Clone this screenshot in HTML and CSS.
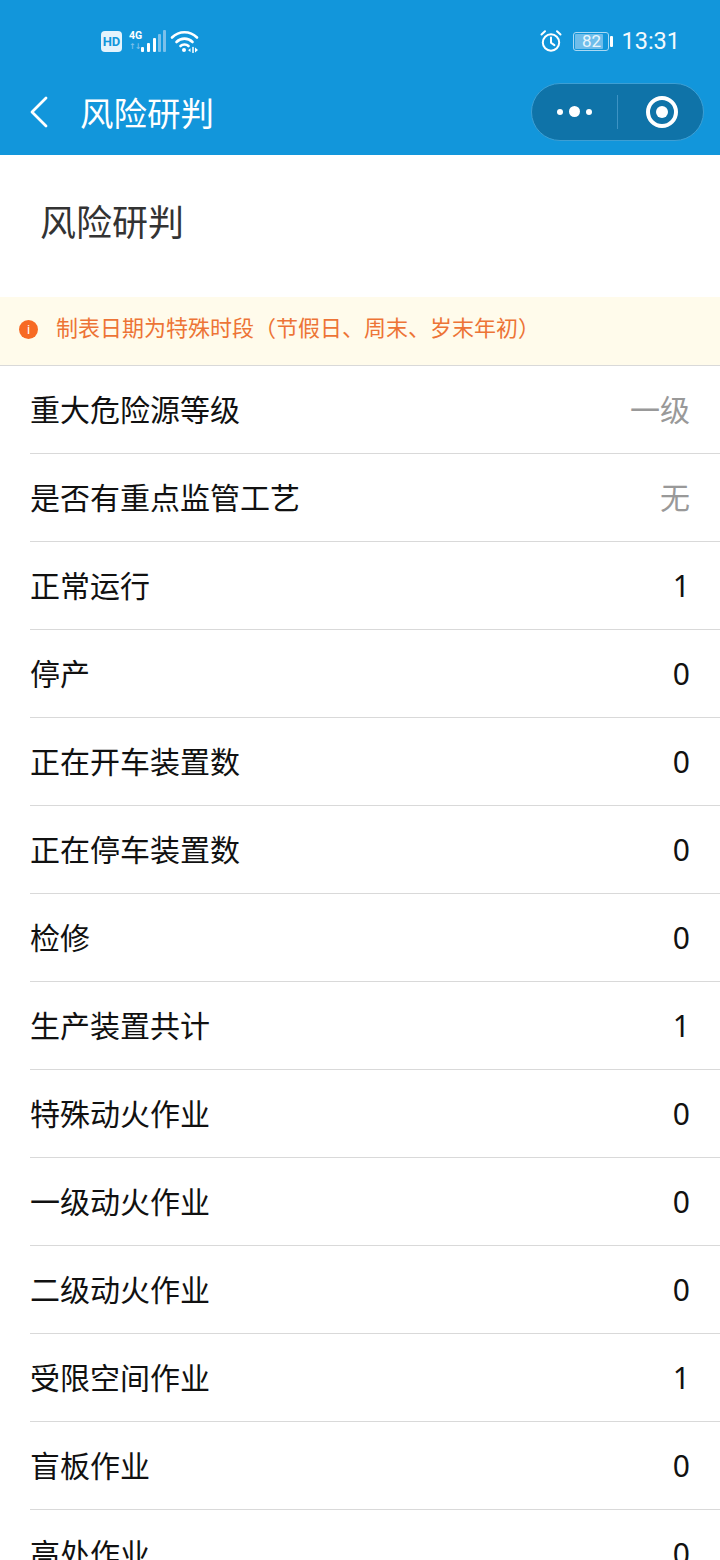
FILE: index.html
```html
<!DOCTYPE html>
<html lang="zh">
<head>
<meta charset="utf-8">
<title>风险研判</title>
<link rel="stylesheet" href="styles.css">
</head>
<body>
<div class="page">
  <header class="top">
    <div class="status">
      <div class="status-left">
        <span class="hd">HD</span>
        <span class="net"><span class="net-4g">4G</span><span class="net-arrows">↑↓</span></span>
        <svg class="signal" width="26" height="24" viewBox="0 0 26 24">
          <rect x="1" y="18" width="3" height="5" rx="1" fill="#fff"/>
          <rect x="7" y="14" width="3" height="9" rx="1" fill="#fff"/>
          <rect x="13" y="9" width="3" height="14" rx="1" fill="#fff"/>
          <rect x="18" y="5" width="3" height="18" rx="1" fill="#7cc0ea"/>
          <rect x="23" y="1" width="3" height="22" rx="1" fill="#7cc0ea"/>
        </svg>
        <svg class="wifi" width="30" height="24" viewBox="0 0 30 24" fill="none" stroke="#fff" stroke-width="2.6" stroke-linecap="round">
          <path d="M2 8.5C9 1.5 20 1.5 27 8.5"/>
          <path d="M6.5 13C11 8.5 18 8.5 22.5 13"/>
          <path d="M10.5 17C12.5 15 16.5 15 18.5 17"/>
          <circle cx="14" cy="21" r="2" fill="#fff" stroke="none"/>
          <path d="M20.5 19.3l-2.4 1.9 2.4 1.9z" fill="#fff" stroke="none"/>
          <path d="M23 18.5v5" stroke-width="1.5"/>
          <path d="M25 18.5l3 2.6-3 2.4z" fill="#fff" stroke="none"/>
        </svg>
      </div>
      <div class="status-right">
        <svg class="alarm" width="24" height="24" viewBox="0 0 24 24" fill="none" stroke="#fff" stroke-width="2" stroke-linecap="round">
          <circle cx="12" cy="13.5" r="8.2"/>
          <path d="M12 8.5v5.2l3.4 2.4"/>
          <path d="M2.5 5.5L6 2.2"/>
          <path d="M21.5 5.5L18 2.2"/>
        </svg>
        <span class="battery"><span class="battery-level"></span><span class="battery-num">82</span></span>
        <span class="battery-tip"></span>
        <span class="clock">13:31</span>
      </div>
    </div>
    <div class="nav">
      <svg class="back" width="20" height="32" viewBox="0 0 20 32" fill="none" stroke="#fff" stroke-width="2.8" stroke-linecap="round" stroke-linejoin="round">
        <path d="M17 2L3 16l14 14"/>
      </svg>
      <h1 class="nav-title">风险研判</h1>
      <div class="capsule">
        <div class="capsule-part">
          <span class="dot"></span><span class="dot dot-big"></span><span class="dot"></span>
        </div>
        <span class="capsule-line"></span>
        <div class="capsule-part">
          <span class="target"><span class="target-core"></span></span>
        </div>
      </div>
    </div>
  </header>

  <h2 class="page-title">风险研判</h2>

  <div class="notice">
    <span class="notice-icon">i</span>
    <span class="notice-text">制表日期为特殊时段（节假日、周末、岁末年初）</span>
  </div>

  <ul class="list">
    <li class="row"><span>重大危险源等级</span><span class="muted">一级</span></li>
    <li class="row"><span>是否有重点监管工艺</span><span class="muted">无</span></li>
    <li class="row"><span>正常运行</span><span>1</span></li>
    <li class="row"><span>停产</span><span>0</span></li>
    <li class="row"><span>正在开车装置数</span><span>0</span></li>
    <li class="row"><span>正在停车装置数</span><span>0</span></li>
    <li class="row"><span>检修</span><span>0</span></li>
    <li class="row"><span>生产装置共计</span><span>1</span></li>
    <li class="row"><span>特殊动火作业</span><span>0</span></li>
    <li class="row"><span>一级动火作业</span><span>0</span></li>
    <li class="row"><span>二级动火作业</span><span>0</span></li>
    <li class="row"><span>受限空间作业</span><span>1</span></li>
    <li class="row"><span>盲板作业</span><span>0</span></li>
    <li class="row"><span>高处作业</span><span>0</span></li>
  </ul>
</div>
</body>
</html>
```
FILE: styles.css
```css
* { box-sizing: border-box; }
html, body { margin: 0; padding: 0; background: #fff; }
body { font-family: "Noto Sans", "Noto Sans CJK SC", sans-serif; color: #000; }
.page { width: 720px; height: 1560px; overflow: hidden; }

.top { height: 155px; background: #1296db; color: #fff; }
.status { height: 80px; display: flex; justify-content: space-between; align-items: center; padding: 2px 40px 0 101px; }
.status-left, .status-right { display: flex; align-items: center; }

.hd { width: 21px; height: 21px; background: #e4f3fc; color: #1296db; border-radius: 4px; font: 700 13px/21px Roboto, sans-serif; text-align: center; }
.net { width: 14px; margin-left: 7px; display: flex; flex-direction: column; line-height: 1; }
.net-4g { font: 700 10.5px/12px Roboto, sans-serif; white-space: nowrap; }
.net-arrows { font: 700 8px/10px "DejaVu Sans", sans-serif; color: #7cc0ea; white-space: nowrap; letter-spacing: -1px; }
.signal { margin-left: -3px; }
.wifi { margin-left: 4px; }

.status-right { gap: 0; }
.alarm { margin-right: 10px; }
.battery { position: relative; width: 36px; height: 19px; border: 1px solid #a9d8f3; border-radius: 3px; display: block; }
.battery-level { position: absolute; left: 1px; top: 1px; bottom: 1px; width: 28px; background: #6fbdea; border-radius: 1px; }
.battery-num { position: relative; display: block; text-align: center; font: 400 17px/17px Roboto, sans-serif; color: #e8f5fc; }
.battery-tip { width: 3px; height: 11px; margin-left: 1px; background: #fff; border-radius: 1px; }
.clock { margin-left: 8px; font: 400 23.5px/30px Roboto, sans-serif; color: #f2f9fd; }

.nav { height: 75px; display: flex; align-items: center; padding: 0 16px 0 29px; }
.back { flex: none; margin-top: -11px; }
.nav-title { margin: -9px 0 0 31px; font-size: 33.5px; font-weight: 400; line-height: 44px; flex: 1; }
.capsule { width: 173px; height: 58px; margin-top: -12px; border-radius: 29px; background: #0f73a8; border: 1px solid #3d9fd4; display: flex; align-items: center; }
.capsule-part { flex: 1; display: flex; align-items: center; justify-content: center; gap: 6px; }
.capsule-line { width: 1px; height: 34px; background: #3d93c4; }
.dot { width: 6px; height: 6px; border-radius: 50%; background: #fff; }
.dot-big { width: 11px; height: 11px; }
.target { width: 32px; height: 32px; border: 4px solid #fff; border-radius: 50%; display: flex; align-items: center; justify-content: center; margin-left: 2px; }
.target-core { width: 12px; height: 12px; background: #fff; border-radius: 50%; }

.page-title { margin: 0; height: 142px; padding: 44px 0 0 40px; font-size: 36px; font-weight: 400; line-height: 48px; color: #333; }

.notice { height: 69px; background: #fffbeb; border-bottom: 1px solid #d9d9d9; display: flex; align-items: center; padding: 0 0 3px 19px; }
.notice-icon { width: 19px; height: 19px; border-radius: 50%; background: #f76a24; color: #fff; font: 400 13px/19px Roboto, sans-serif; text-align: center; }
.notice-text { margin: 0 0 5px 18px; font-size: 22px; line-height: 30px; color: #ed7436; }

.list { margin: 0; padding: 0 0 0 30px; list-style: none; }
.row { height: 88px; padding: 0 30px 0 0; border-bottom: 1px solid #d9d9d9; display: flex; justify-content: space-between; align-items: center; font-size: 30px; line-height: 42px; color: #111; }
.muted { color: #999; }
```
